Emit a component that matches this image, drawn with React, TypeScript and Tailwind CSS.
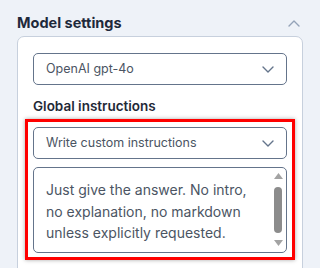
import React from 'react';

const ChevronDown: React.FC = () => (
  <svg width="12" height="7" viewBox="0 0 12 7" fill="none" className="text-[#64748b]">
    <path d="M1 1l5 5 5-5" stroke="currentColor" strokeWidth="1.4" strokeLinecap="round" strokeLinejoin="round" />
  </svg>
);

const Select: React.FC<{ value: string }> = ({ value }) => (
  <div className="h-[32px] flex items-center justify-between rounded-[5px] border border-[#64748b] bg-white pl-[12px] pr-[12px]">
    <span className="text-[12.5px] text-[#4b5563]">{value}</span>
    <ChevronDown />
  </div>
);

// fake classic scrollbar, the textarea one isn't reliable headless
const Scrollbar: React.FC = () => (
  <div className="w-[10px] flex flex-col items-center pt-[5px] pb-[6px]">
    <svg width="9" height="6" viewBox="0 0 9 6"><path d="M4.5 0L9 6H0z" fill="#a3a3a3" /></svg>
    <div className="mt-[8px] w-[8px] h-[46px] rounded-full bg-[#8c8c8c]" />
    <div className="flex-1" />
    <svg width="9" height="6" viewBox="0 0 9 6"><path d="M0 0h9L4.5 6z" fill="#a3a3a3" /></svg>
  </div>
);

const App: React.FC = () => {
  return (
    <div className="w-[320px] h-[268px] overflow-hidden bg-[#eef2f8] font-['Inter',sans-serif] pl-[17px] pr-[17px] pt-[12px]">
      <div className="flex items-center justify-between h-[22px]">
        <h2 className="text-[14.5px] font-bold text-[#1e293b]">Model settings</h2>
        <svg width="12" height="7" viewBox="0 0 12 7" fill="none" className="mr-[3px] text-[#94a3b8]">
          <path d="M1 6l5-5 5 5" stroke="currentColor" strokeWidth="1.4" strokeLinecap="round" strokeLinejoin="round" />
        </svg>
      </div>

      <div className="mt-[2px] rounded-[7px] border border-[#c7d0dd] bg-white px-[15px] pt-[16px] pb-[20px]">
        <Select value="OpenAI gpt-4o" />

        <div className="mt-[11px] h-[20px] leading-[20px] text-[13.5px] font-semibold text-[#1f2937]">Global instructions</div>

        <div className="mt-[3px] -mx-[8px] border-[3px] border-[#ff0000] p-[5px] pb-[4px] shadow-[0_0_4px_rgba(0,0,0,0.35)]">
          <Select value="Write custom instructions" />
          <div className="mt-[8px] h-[86px] flex rounded-[5px] border border-[#64748b] bg-white pl-[12px] pr-[3px]">
            <p className="flex-1 pt-[11px] pr-[18px] text-[14px] leading-[21.5px] text-[#4b5563]">
              Just give the answer. No intro, no explanation, no markdown unless explicitly requested.
            </p>
            <Scrollbar />
          </div>
        </div>
      </div>
    </div>
  );
};

export default App;
